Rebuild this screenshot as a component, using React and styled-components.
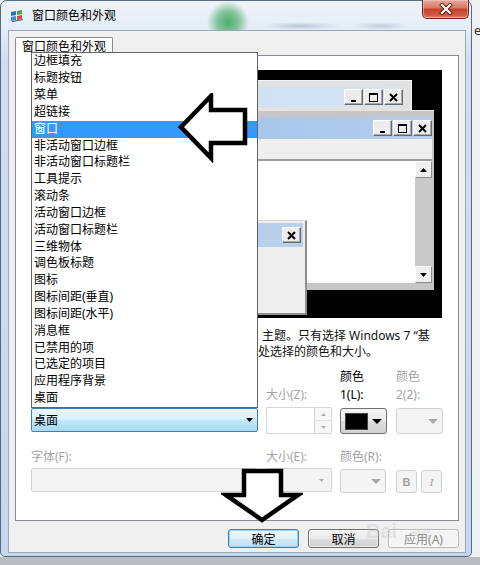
import React from 'react'
import styled, { createGlobalStyle } from 'styled-components'

const GlobalStyle = createGlobalStyle`
  html, body { margin: 0; padding: 0; }
  body {
    background: #e9edf1;
    font-family: "Noto Sans", "Noto Sans CJK SC", sans-serif;
    font-size: 12px;
    color: #000;
  }
  * { box-sizing: border-box; }
`

const items = [
  '边框填充', '标题按钮', '菜单', '超链接', '窗口', '非活动窗口边框',
  '非活动窗口标题栏', '工具提示', '滚动条', '活动窗口边框', '活动窗口标题栏',
  '三维物体', '调色板标题', '图标', '图标间距(垂直)', '图标间距(水平)',
  '消息框', '已禁用的项', '已选定的项目', '应用程序背景', '桌面',
]

const AppIcon = () => (
  <svg width="14" height="14" viewBox="0 0 14 14">
    <path d="M1 3 L6 2 L6 6 L1 7 Z" fill="#2f6fb3" />
    <path d="M7 2 L12 1 L12 5 L7 6 Z" fill="#48a843" />
    <path d="M1 8 L6 7 L6 11 L1 12 Z" fill="#3c8fd6" />
    <path d="M7 7 L12 6 L12 10 L7 11 Z" fill="#d8493a" />
    <path d="M2 12.5 L13 10.5" stroke="#44556a" strokeWidth="1.2" />
  </svg>
)

const CloseGlyph = () => (
  <svg width="14" height="12" viewBox="0 0 14 12">
    <path d="M3 2 L11 10 M11 2 L3 10" stroke="#5a1a12" strokeWidth="4" strokeLinecap="square" />
    <path d="M3 2 L11 10 M11 2 L3 10" stroke="#fff" strokeWidth="2.2" strokeLinecap="square" />
  </svg>
)

const CapGlyph = ({ kind }) => (
  <svg width="11" height="11" viewBox="0 0 11 11">
    {kind === 'min' && <rect x="3" y="8" width="5" height="2" fill="#000" />}
    {kind === 'max' && (
      <>
        <rect x="1.5" y="1.5" width="8" height="8" fill="none" stroke="#000" />
        <rect x="1" y="1" width="9" height="2" fill="#000" />
      </>
    )}
    {kind === 'close' && <path d="M2 2 L9 9 M9 2 L2 9" stroke="#000" strokeWidth="2" />}
  </svg>
)

const Tri = ({ dir = 'down', w = 7, h = 4, color = '#000' }) => (
  <svg width={w} height={h} viewBox={`0 0 ${w} ${h}`}>
    <path d={dir === 'down' ? `M0 0 L${w} 0 L${w / 2} ${h} Z` : `M0 ${h} L${w} ${h} L${w / 2} 0 Z`} fill={color} />
  </svg>
)

const CaptionButtons = () => (
  <CapGroup>
    <CapButton><CapGlyph kind="min" /></CapButton>
    <CapButton><CapGlyph kind="max" /></CapButton>
    <CapButton><CapGlyph kind="close" /></CapButton>
  </CapGroup>
)

export default function App() {
  return (
    <>
      <GlobalStyle />
      <Page>
        <Desk>
          <Window>
            <TitleBar>
              <AppIcon />
              <Caption>窗口颜色和外观</Caption>
              <CloseButton><CloseGlyph /></CloseButton>
            </TitleBar>
            <Client>
              <TabStrip><Tab>窗口颜色和外观</Tab></TabStrip>
              <TabPanel>
                <Preview>
                  <InactiveWin>
                    <WinTitle $inactive><CaptionButtons /></WinTitle>
                  </InactiveWin>
                  <ActiveWin>
                    <WinTitle><CaptionButtons /></WinTitle>
                    <MenuBar />
                    <TextArea>
                      <TextBody />
                      <ScrollBar>
                        <ScrollBtn><Tri dir="up" /></ScrollBtn>
                        <ScrollTrack />
                        <ScrollBtn><Tri dir="down" /></ScrollBtn>
                      </ScrollBar>
                    </TextArea>
                  </ActiveWin>
                  <MsgBox>
                    <MsgTitle><CapButton><CapGlyph kind="close" /></CapButton></MsgTitle>
                  </MsgBox>
                </Preview>

                <Description>
                  <DescLine $indent={231}>主题。只有选择 Windows 7 “基</DescLine>
                  <DescLine $indent={227}>处选择的颜色和大小。</DescLine>
                </Description>

                <FormRow $top={8}>
                  <LabelStack />
                  <LabelStack $disabled><span>&nbsp;</span><span>大小(Z):</span></LabelStack>
                  <LabelStack><span>颜色</span><span>1(L):</span></LabelStack>
                  <LabelStack $disabled><span>颜色</span><span>2(2):</span></LabelStack>
                </FormRow>

                <FormRow $top={3}>
                  <ComboWrap>
                    <Popup>
                      {items.map(item => (
                        <PopupItem key={item} $selected={item === '窗口'}>{item}</PopupItem>
                      ))}
                    </Popup>
                    <HotCombo>
                      <span>桌面</span>
                      <Tri />
                    </HotCombo>
                  </ComboWrap>
                  <Spinner>
                    <SpinField />
                    <SpinButtons>
                      <SpinBtn><Tri dir="up" w={5} h={3} color="#b0b0b0" /></SpinBtn>
                      <SpinBtn><Tri dir="down" w={5} h={3} color="#b0b0b0" /></SpinBtn>
                    </SpinButtons>
                  </Spinner>
                  <ColorButton>
                    <Swatch />
                    <Tri w={10} h={5} />
                  </ColorButton>
                  <ColorButton $disabled>
                    <span />
                    <Tri w={10} h={5} color="#a8a8a8" />
                  </ColorButton>
                </FormRow>

                <FormRow $top={15}>
                  <Label $disabled>字体(F):</Label>
                  <Label $disabled>大小(E):</Label>
                  <Label $disabled>颜色(R):</Label>
                  <span />
                </FormRow>

                <FormRow $top={3}>
                  <DisabledCombo><span /><Tri w={5} h={3} color="#b0b0b0" /></DisabledCombo>
                  <DisabledCombo><span /><Tri w={5} h={3} color="#b0b0b0" /></DisabledCombo>
                  <ColorButton $disabled $small>
                    <span />
                    <Tri w={10} h={5} color="#a8a8a8" />
                  </ColorButton>
                  <StyleButtons>
                    <StyleButton $bold>B</StyleButton>
                    <StyleButton $italic>I</StyleButton>
                  </StyleButtons>
                </FormRow>
              </TabPanel>

              <ButtonRow>
                <DialogButton $kind="default">确定</DialogButton>
                <DialogButton>取消</DialogButton>
                <DialogButton $kind="disabled">应用(A)</DialogButton>
              </ButtonRow>
            </Client>
          </Window>
          <Side><SideGlyph>e</SideGlyph></Side>
        </Desk>
        <BottomStrip />

        <Watermark>Bai<small>经验</small></Watermark>

        <LeftArrow width="72" height="70" viewBox="0 0 72 70">
          <polygon points="3,34 33,3 33,17 67,17 67,50 33,50 33,65" fill="#fff" stroke="#000" strokeWidth="4.5" strokeLinejoin="miter" />
        </LeftArrow>
        <DownArrow width="82" height="56" viewBox="0 0 82 56">
          <polygon points="23,3 60,3 60,27 77,27 41,52 5,27 23,27" fill="#fff" stroke="#000" strokeWidth="4.5" strokeLinejoin="miter" />
        </DownArrow>
      </Page>
    </>
  )
}

const Page = styled.div`
  position: relative;
  width: 480px;
  height: 565px;
  overflow: hidden;
  display: flex;
  flex-direction: column;
  background: #e9edf1;
`

const Desk = styled.div`
  display: flex;
  height: 557px;
`

const Window = styled.div`
  width: 472px;
  height: 557px;
  flex: none;
  display: flex;
  flex-direction: column;
  padding: 0 5px 3px 7px;
  border: 1px solid #566a80;
  border-radius: 7px 7px 5px 5px;
  background:
    radial-gradient(circle at 227px 21px, rgba(52, 160, 84, 0.85) 0, rgba(52, 160, 84, 0.55) 11px, rgba(52, 160, 84, 0) 21px),
    radial-gradient(ellipse 40px 4px at 300px 25px, rgba(110, 125, 150, 0.35), rgba(110, 125, 150, 0)),
    radial-gradient(ellipse 28px 4px at 380px 25px, rgba(110, 125, 150, 0.3), rgba(110, 125, 150, 0)),
    linear-gradient(to bottom, #eef3f9 0, #e4edf7 28px, #cfdef0 60px, #c6d8ed 100%);
`

const TitleBar = styled.div`
  height: 29px;
  flex: none;
  display: flex;
  align-items: center;
  padding-left: 2px;
  gap: 8px;
`

const Caption = styled.div`
  font-size: 12px;
  color: #000;
  line-height: 16px;
  margin-top: 1px;
`

const CloseButton = styled.div`
  margin-left: auto;
  margin-right: -3px;
  align-self: flex-start;
  width: 47px;
  height: 19px;
  margin-top: -1px;
  display: flex;
  align-items: center;
  justify-content: center;
  border: 1px solid #6e2a20;
  border-top: none;
  border-radius: 0 0 5px 5px;
  background: linear-gradient(to bottom, #e8a89c 0%, #d97a68 42%, #c4432c 52%, #cf5a42 85%, #e08a70 100%);
  box-shadow: inset 0 0 0 1px rgba(255, 220, 210, 0.45);
`

const Client = styled.div`
  flex: 1;
  display: flex;
  flex-direction: column;
  padding: 6px 6px 0 6px;
  background: #f0f0f0;
  border: 1px solid #98a9bd;
`

const TabStrip = styled.div`
  display: flex;
  position: relative;
  z-index: 1;
  margin-bottom: -1px;
`

const Tab = styled.div`
  width: 98px;
  height: 19px;
  padding-top: 1px;
  text-align: center;
  line-height: 16px;
  font-size: 12px;
  background: #fff;
  border: 1px solid #898c95;
  border-bottom: none;
  border-radius: 2px 2px 0 0;
`

const TabPanel = styled.div`
  position: relative;
  height: 466px;
  flex: none;
  display: flex;
  flex-direction: column;
  padding: 14px 16px 0 15px;
  background: #fff;
  border: 1px solid #898c95;
`

const Preview = styled.div`
  position: relative;
  height: 248px;
  flex: none;
  background: #000;
  overflow: hidden;
`

const InactiveWin = styled.div`
  position: absolute;
  left: 8px;
  top: 10px;
  width: 373px;
  height: 100px;
  padding: 6px 8px 0 8px;
  background: #e2e2e2;
  border: 1px solid #f2f2f2;
`

const ActiveWin = styled.div`
  position: absolute;
  left: 16px;
  top: 40px;
  width: 387px;
  height: 180px;
  display: flex;
  flex-direction: column;
  padding: 6px 2px 7px 6px;
  background: #c6c6c6;
  border-top: 1px solid #e4e4e4;
`

const WinTitle = styled.div`
  height: ${p => (p.$inactive ? 20 : 22)}px;
  flex: none;
  display: flex;
  align-items: center;
  justify-content: flex-end;
  background: ${p =>
    p.$inactive
      ? 'linear-gradient(to right, #c9dcf0, #d6e4f3)'
      : 'linear-gradient(to right, #9fc0e7, #b3cdec)'};
`

const CapGroup = styled.div`
  display: flex;
  gap: 1px;
`

const CapButton = styled.div`
  width: 19px;
  height: 16px;
  display: flex;
  align-items: center;
  justify-content: center;
  background: #ededed;
  border-top: 1px solid #fff;
  border-left: 1px solid #fff;
  border-right: 1px solid #6a6a6a;
  border-bottom: 1px solid #6a6a6a;
  box-shadow: inset -1px -1px 0 #a8a8a8;
`

const MenuBar = styled.div`
  height: 20px;
  flex: none;
  background: #efefef;
`

const TextArea = styled.div`
  flex: 1;
  display: flex;
  border-top: 2px solid #9c9c9c;
  border-left: 2px solid #9c9c9c;
  background: #fff;
`

const TextBody = styled.div`
  flex: 1;
`

const ScrollBar = styled.div`
  width: 17px;
  display: flex;
  flex-direction: column;
  background: #c9c9c9;
`

const ScrollBtn = styled.div`
  height: 17px;
  flex: none;
  display: flex;
  align-items: center;
  justify-content: center;
  background: #efefef;
  border-top: 1px solid #fff;
  border-left: 1px solid #fff;
  border-right: 1px solid #8a8a8a;
  border-bottom: 1px solid #8a8a8a;
`

const ScrollTrack = styled.div`
  flex: 1;
`

const MsgBox = styled.div`
  position: absolute;
  left: 24px;
  top: 150px;
  width: 252px;
  height: 95px;
  padding: 2px 2px 0 4px;
  background: #eeeeee;
  border-top: 1px solid #d8d8d8;
  border-right: 2px solid #8e8e8e;
  border-bottom: 2px solid #8e8e8e;
`

const MsgTitle = styled.div`
  height: 24px;
  display: flex;
  align-items: center;
  justify-content: flex-end;
  padding-right: 2px;
  background: linear-gradient(to right, #a9c7ea, #b9d1ec);
`

const Description = styled.div`
  margin-top: 10px;
  display: flex;
  flex-direction: column;
`

const DescLine = styled.div`
  height: 16px;
  line-height: 16px;
  padding-left: ${p => p.$indent}px;
  white-space: nowrap;
  overflow: hidden;
  color: #111;
`

const FormRow = styled.div`
  margin-top: ${p => p.$top}px;
  display: grid;
  grid-template-columns: 227px 66px 48px 46px;
  column-gap: 8px;
  align-items: start;
`

const Label = styled.div`
  line-height: 16px;
  color: ${p => (p.$disabled ? '#a3a3a3' : '#000')};
  white-space: nowrap;
`

const LabelStack = styled.div`
  display: flex;
  flex-direction: column;
  line-height: 18px;
  height: 36px;
  color: ${p => (p.$disabled ? '#a3a3a3' : '#000')};
  white-space: nowrap;
`

const ComboWrap = styled.div`
  position: relative;
  margin-top: 1px;
`

const Popup = styled.div`
  position: absolute;
  left: 0;
  right: 0;
  bottom: 100%;
  z-index: 10;
  background: #fff;
  border: 1px solid #646464;
`

const PopupItem = styled.div`
  height: 16.85px;
  line-height: 16.85px;
  padding-left: 2px;
  white-space: nowrap;
  color: ${p => (p.$selected ? '#fff' : '#000')};
  background: ${p => (p.$selected ? '#3399ff' : 'transparent')};
`

const HotCombo = styled.div`
  height: 24px;
  display: flex;
  align-items: center;
  justify-content: space-between;
  padding: 0 4px 0 2px;
  border: 1px solid #3c7fb1;
  border-radius: 2px;
  background: linear-gradient(to bottom, #eaf6fd 0%, #d9f0fc 45%, #bee6fd 55%, #a7d9f5 100%);
`

const Spinner = styled.div`
  height: 27px;
  display: flex;
`

const SpinField = styled.div`
  flex: 1;
  background: #fff;
  border: 1px solid #d5d5d5;
  border-right: none;
  border-radius: 2px 0 0 2px;
`

const SpinButtons = styled.div`
  width: 18px;
  display: flex;
  flex-direction: column;
  border: 1px solid #d5d5d5;
  border-radius: 0 2px 2px 0;
`

const SpinBtn = styled.div`
  flex: 1;
  display: flex;
  align-items: center;
  justify-content: center;
  background: #f7f7f7;
  & + & { border-top: 1px solid #e0e0e0; }
`

const ColorButton = styled.div`
  height: ${p => (p.$small ? 24 : 26)}px;
  margin-top: 1px;
  width: ${p => (p.$small ? 46 : 47)}px;
  display: flex;
  align-items: center;
  justify-content: space-between;
  padding: 0 4px 0 4px;
  border: 1px solid ${p => (p.$disabled ? '#d0d0d0' : '#707070')};
  border-radius: 3px;
  background: ${p =>
    p.$disabled
      ? '#f4f4f4'
      : 'linear-gradient(to bottom, #f4f4f4 0%, #ebebeb 50%, #dddddd 51%, #d2d2d2 100%)'};
`

const Swatch = styled.div`
  width: 23px;
  height: 17px;
  background: #000;
  border: 1px solid #444;
`

const DisabledCombo = styled.div`
  height: 24px;
  display: flex;
  align-items: center;
  justify-content: space-between;
  padding: 0 7px 0 4px;
  background: #f4f4f4;
  border: 1px solid #d3d3d3;
  border-radius: 2px;
`

const StyleButtons = styled.div`
  display: flex;
  gap: 4px;
  margin-top: 2px;
`

const StyleButton = styled.div`
  width: 21px;
  height: 23px;
  display: flex;
  align-items: center;
  justify-content: center;
  color: #a0a0a0;
  font-size: 11px;
  font-family: ${p => (p.$italic ? '"Liberation Serif", serif' : '"Liberation Sans", sans-serif')};
  font-weight: ${p => (p.$bold ? 700 : 400)};
  font-style: ${p => (p.$italic ? 'italic' : 'normal')};
  background: #f4f4f4;
  border: 1px solid #d0d0d0;
  border-radius: 3px;
`

const ButtonRow = styled.div`
  margin-top: 8px;
  display: flex;
  justify-content: flex-end;
  gap: 9px;
`

const DialogButton = styled.div`
  width: 71px;
  height: 19px;
  display: flex;
  align-items: center;
  justify-content: center;
  font-size: 12px;
  border-radius: 3px;
  color: ${p => (p.$kind === 'disabled' ? '#8a8a8a' : '#000')};
  border: 1px solid ${p => (p.$kind === 'default' ? '#3c7fb1' : p.$kind === 'disabled' ? '#b5b9bc' : '#707070')};
  background: ${p =>
    p.$kind === 'disabled'
      ? '#f4f4f4'
      : p.$kind === 'default'
        ? 'linear-gradient(to bottom, #eef7fd 0%, #e1f1fb 50%, #cfe8f7 51%, #c3e1f3 100%)'
        : 'linear-gradient(to bottom, #f2f2f2 0%, #ebebeb 50%, #dddddd 51%, #cfcfcf 100%)'};
  box-shadow: ${p => (p.$kind === 'default' ? 'inset 0 0 0 1px #9fd3f5' : 'inset 0 0 0 1px rgba(255,255,255,0.6)')};
`

const Side = styled.div`
  width: 8px;
  overflow: hidden;
  padding-top: 22px;
  background: #eef1f4;
`

const SideGlyph = styled.span`
  display: block;
  margin-left: 2px;
  font-size: 13px;
  color: #333;
  line-height: 16px;
`

const BottomStrip = styled.div`
  flex: 1;
  background: #b9bdc2;
`

const Watermark = styled.div`
  position: absolute;
  left: 366px;
  top: 520px;
  font-family: "Liberation Sans", sans-serif;
  font-size: 20px;
  font-weight: 700;
  color: rgba(190, 190, 190, 0.35);
  pointer-events: none;
  & small {
    font-size: 10px;
    margin-left: 14px;
    font-family: "Noto Sans CJK SC", sans-serif;
  }
`

const LeftArrow = styled.svg`
  position: absolute;
  left: 178px;
  top: 93px;
  z-index: 20;
  pointer-events: none;
`

const DownArrow = styled.svg`
  position: absolute;
  left: 221px;
  top: 468px;
  z-index: 20;
  pointer-events: none;
`
